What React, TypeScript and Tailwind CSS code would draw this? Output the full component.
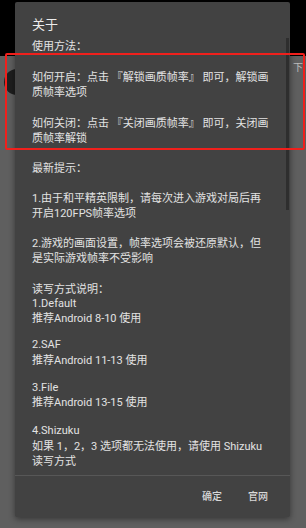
const font = {
  fontFamily: 'Roboto, "Noto Sans CJK SC", "Noto Sans", sans-serif',
};

export default function App() {
  return (
    <div
      className="relative w-[306px] h-[528px] overflow-hidden bg-[#5f5f5f]"
      style={font}
    >
      {/* page behind the dialog */}
      <div className="h-[56px] bg-black" />
      <div className="flex justify-between">
        <div className="ml-[4px] mt-[13px] w-[26px] h-[26px] rounded-full bg-[#1e1e1e]" />
        <div className="mt-[6px] mr-[3px] text-[10px] leading-[12px] text-[#bdbdbd]">下</div>
      </div>

      {/* dialog */}
      <div className="absolute left-[15px] top-[2px] w-[275px] h-[515px] rounded-[2px] bg-[#424242] shadow-[0_2px_6px_rgba(0,0,0,0.45)] flex flex-col">
        <div className="pt-[13px] px-[17px] h-[33px] flex items-end">
          <div className="h-[20px] leading-[20px] text-[13px] text-[#ececec]">关于</div>
        </div>

        <div className="relative h-[440px] overflow-hidden px-[17px] text-[11px] text-[#e2e2e2] whitespace-nowrap">
          <div className="mt-[4px] h-[15px] leading-[15px]">使用方法：</div>

          <div className="mt-[16px] h-[15px] leading-[15px]">如何开启：点击 『解锁画质帧率』 即可，解锁画</div>
          <div className="h-[15px] leading-[15px]">质帧率选项</div>

          <div className="mt-[16px] h-[15px] leading-[15px]">如何关闭：点击 『关闭画质帧率』 即可，关闭画</div>
          <div className="h-[15px] leading-[15px]">质帧率解锁</div>

          <div className="mt-[15px] h-[15px] leading-[15px]">最新提示：</div>

          <div className="mt-[15px] h-[15px] leading-[15px]">1.由于和平精英限制，请每次进入游戏对局后再</div>
          <div className="h-[15px] leading-[15px]">开启120FPS帧率选项</div>

          <div className="mt-[15px] h-[15px] leading-[15px]">2.游戏的画面设置，帧率选项会被还原默认，但</div>
          <div className="h-[15px] leading-[15px]">是实际游戏帧率不受影响</div>

          <div className="mt-[16px] h-[15px] leading-[15px]">读写方式说明：</div>
          <div className="h-[14px] leading-[14px]">1.Default</div>
          <div className="h-[15px] leading-[15px]">推荐Android 8-10 使用</div>

          <div className="mt-[12px] h-[14px] leading-[14px]">2.SAF</div>
          <div className="mt-[1px] h-[15px] leading-[15px]">推荐Android 11-13 使用</div>

          <div className="mt-[13px] h-[14px] leading-[14px]">3.File</div>
          <div className="h-[15px] leading-[15px]">推荐Android 13-15 使用</div>

          <div className="mt-[14px] h-[14px] leading-[14px]">4.Shizuku</div>
          <div className="mt-[1px] h-[15px] leading-[15px]">如果 1，2，3 选项都无法使用，请使用 Shizuku</div>
          <div className="h-[15px] leading-[15px]">读写方式</div>

          {/* scrollbar thumb */}
          <div className="absolute right-[1px] top-[3px] w-[3px] h-[172px] bg-[#2e2e2e]" />
        </div>

        <div className="h-px bg-[#575757]" />

        <div className="flex-1 flex items-center justify-end gap-[26px] pr-[22px] text-[10px] font-medium text-[#d8d8d8]">
          <span>确定</span>
          <span>官网</span>
        </div>
      </div>

      {/* red annotation box */}
      <div className="absolute left-[5px] top-[53px] w-[300px] h-[97px] rounded-[2px] border-2 border-[#f0201c]" />
    </div>
  );
}
